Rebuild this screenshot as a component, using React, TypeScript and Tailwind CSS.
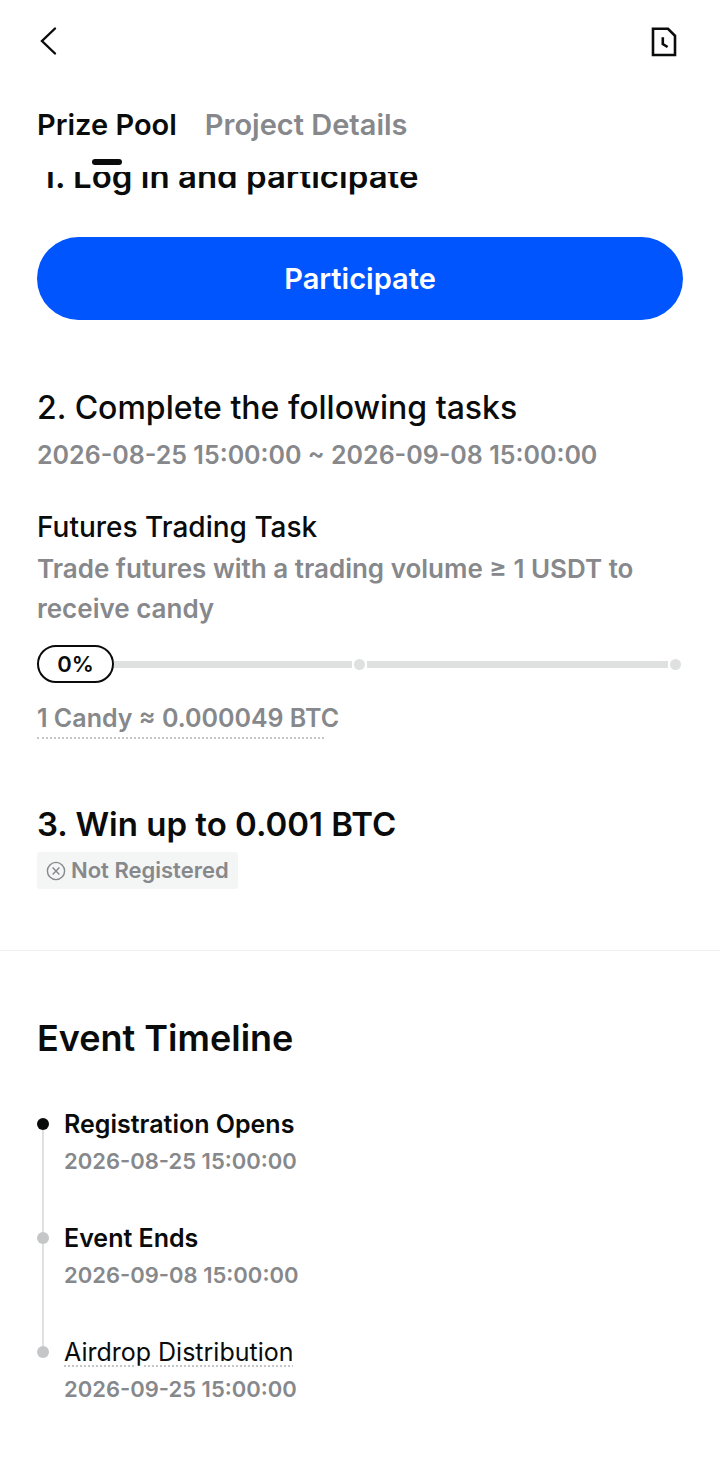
import { useState } from 'react';

const tabs = ['Prize Pool', 'Project Details'];

const timeline = [
  { title: 'Registration Opens', date: '2026-08-25 15:00:00', active: true, hint: false },
  { title: 'Event Ends', date: '2026-09-08 15:00:00', active: false, hint: false },
  { title: 'Airdrop Distribution', date: '2026-09-25 15:00:00', active: false, hint: true },
];

function BackIcon() {
  return (
    <svg width="20" height="30" viewBox="0 0 20 30" fill="none" stroke="#0a0b0b" strokeWidth="2.4" strokeLinecap="round">
      <path d="M18 2.5 5 15 18 27.5" strokeLinejoin="miter" />
    </svg>
  );
}

function HistoryIcon() {
  return (
    <svg width="28" height="32" viewBox="0 0 28 32" fill="none" stroke="#0a0b0b" strokeWidth="2.6">
      <path d="M3 3.8H18L25 10.8V30H3Z" />
      <path d="M12.8 12.2V19L17.6 22" />
    </svg>
  );
}

function ClosedIcon() {
  return (
    <svg width="20" height="20" viewBox="0 0 20 20" fill="none" stroke="#86888b" strokeWidth="1.4">
      <circle cx="10" cy="10" r="8.6" />
      <path d="M6.6 6.6 13.4 13.4M13.4 6.6 6.6 13.4" />
    </svg>
  );
}

export default function App() {
  const [activeTab, setActiveTab] = useState('Prize Pool');

  return (
    <div className="min-h-screen bg-white text-[#0a0b0b] font-['Inter','Liberation_Sans',sans-serif]">
      <header>
        <div className="flex items-center justify-between h-[82px] pl-[37px] pr-[42px]">
          <button aria-label="Back">
            <BackIcon />
          </button>
          <button aria-label="History">
            <HistoryIcon />
          </button>
        </div>

        {/* Tabs */}
        <nav className="flex gap-7 h-[90px] px-[37px] pt-[23px]">
          {tabs.map((tab) => (
            <button
              key={tab}
              onClick={() => setActiveTab(tab)}
              className={`flex flex-col items-center gap-[14px] h-[60px] text-[29px] leading-[40px] font-semibold whitespace-nowrap ${
                activeTab === tab ? 'text-[#0a0b0b]' : 'text-[#86888b]'
              }`}
            >
              {tab}
              {activeTab === tab && <span className="w-[30px] h-[6px] shrink-0 rounded-full bg-[#0a0b0b]" />}
            </button>
          ))}
        </nav>
      </header>

      {/* Scrolled content, cut off under the tabs */}
      <main className="overflow-hidden">
        <section className="px-[37px]">
          <h2 className="-mt-[18px] pl-1 text-[33px] leading-[44px] font-semibold">1. Log in and participate</h2>
          <button className="w-full h-[83px] mt-[39px] rounded-full bg-[#0055ff] text-white text-[29px] leading-[40px] font-semibold">
            Participate
          </button>
        </section>

        <section className="px-[37px] pt-[66px]">
          <h2 className="text-[32px] leading-[44px] font-medium">2. Complete the following tasks</h2>
          <p className="mt-[5px] text-[25px] leading-[40px] font-semibold text-[#86888b]">
            2026-08-25 15:00:00 ~ 2026-09-08 15:00:00
          </p>

          <h3 className="mt-8 text-[28px] leading-[40px] font-medium">Futures Trading Task</h3>
          <p className="mt-[2px] text-[26px] leading-[40px] font-semibold text-[#86888b]">
            Trade futures with a trading volume ≥ 1 USDT to receive candy
          </p>

          {/* Progress */}
          <div className="flex items-center mt-4 pr-[2px]">
            <span className="flex items-center justify-center w-[77px] h-[38px] rounded-full border-2 border-[#0a0b0b] text-[22px] font-semibold">
              0%
            </span>
            <span className="flex-1 h-[7px] bg-[#dfe0e0]" />
            <span className="w-[11px] h-[11px] mx-[2px] rounded-full bg-[#dfe0e0]" />
            <span className="w-[46.7%] h-[7px] bg-[#dfe0e0]" />
            <span className="w-[11px] h-[11px] ml-[2px] rounded-full bg-[#dfe0e0]" />
          </div>

          <p className="w-[287px] mt-4 border-b-2 border-dotted border-[#c4c6c8] text-[25px] leading-[38px] font-semibold text-[#86888b] whitespace-nowrap">
            1 Candy ≈ 0.000049 BTC
          </p>
        </section>

        <section className="px-[37px] pt-[63px] pb-[61px] border-b border-[#eeefef]">
          <h2 className="text-[33px] leading-[44px] font-semibold">3. Win up to 0.001 BTC</h2>
          <div className="inline-flex items-center gap-[5px] h-[37px] mt-[6px] px-[9px] rounded-[3px] bg-[#f4f5f5] text-[22px] font-semibold text-[#86888b]">
            <ClosedIcon />
            Not Registered
          </div>
        </section>

        <section className="px-[37px] pt-[65px] pb-[58px]">
          <h2 className="text-[36px] leading-[44px] font-semibold">Event Timeline</h2>
          <ol className="mt-[46px]">
            {timeline.map((step, i) => (
              <li key={step.title} className="flex gap-[15px]">
                <div className="flex flex-col items-center w-3">
                  <span className={`w-[2px] h-3 ${i > 0 ? 'bg-[#dfe0e0]' : ''}`} />
                  <span className={`w-3 h-3 rounded-full ${step.active ? 'bg-[#0a0b0b]' : 'bg-[#c4c6c8]'}`} />
                  {i < timeline.length - 1 && <span className="flex-1 w-[2px] bg-[#dfe0e0]" />}
                </div>
                <div className={i < timeline.length - 1 ? 'pb-[41px]' : ''}>
                  <h3 className={`text-[25px] leading-[36px] ${step.hint ? 'font-normal' : 'font-semibold'}`}>
                    <span className={step.hint ? 'underline decoration-dotted decoration-[#c4c6c8] decoration-2 underline-offset-4' : ''}>
                      {step.title}
                    </span>
                  </h3>
                  <p className="mt-px text-[22px] leading-[36px] font-semibold text-[#86888b]">{step.date}</p>
                </div>
              </li>
            ))}
          </ol>
        </section>
      </main>
    </div>
  );
}
